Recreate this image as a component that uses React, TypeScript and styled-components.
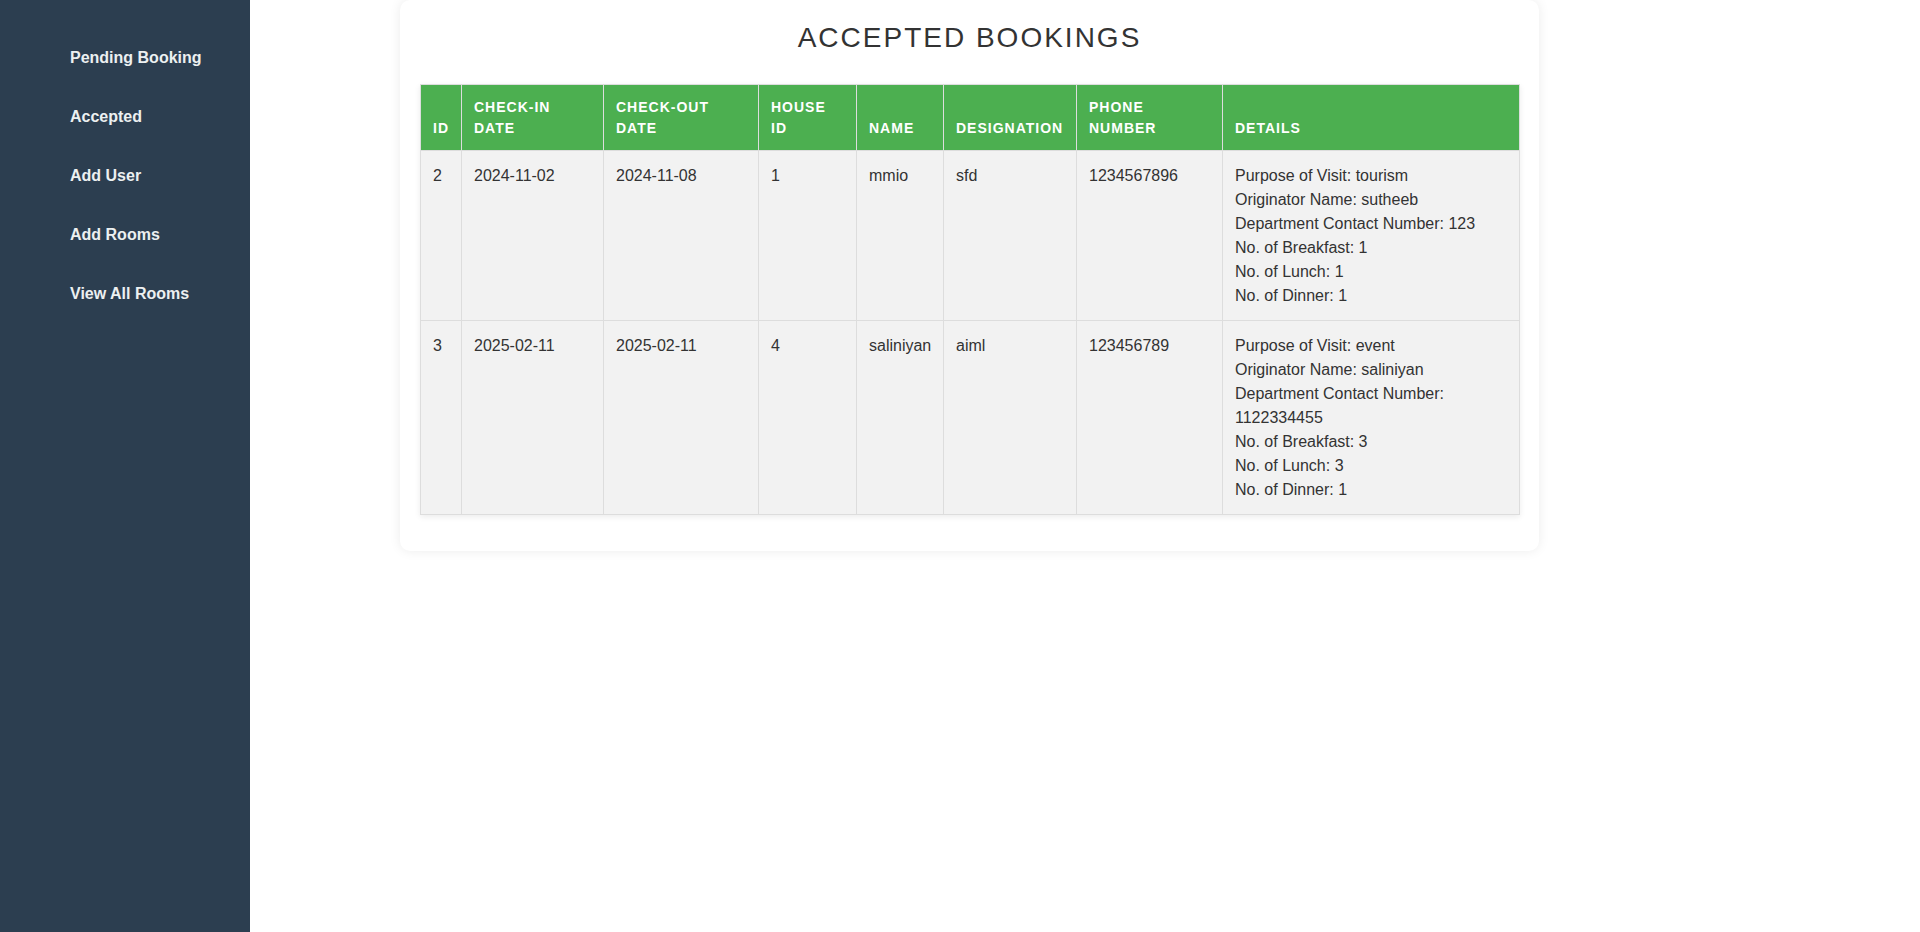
import React from "react";
import styled, { createGlobalStyle } from "styled-components";

const GlobalStyle = createGlobalStyle`
  html, body {
    margin: 0;
    padding: 0;
    background: #ffffff;
    font-family: "Liberation Sans", Arial, sans-serif;
  }
`;

export const Layout = styled.div`
  display: flex;
  min-height: 932px;
`;

export const Sidebar = styled.nav`
  width: 250px;
  flex-shrink: 0;
  background-color: #2c3e50;
  padding: 28px 0 0 70px;
  box-sizing: border-box;
`;

export const NavItem = styled.a`
  display: block;
  padding: 20px 0;
  line-height: 19px;
  font-size: 16px;
  font-weight: bold;
  color: #ecf0f1;
  text-decoration: none;
  cursor: pointer;
`;

export const Main = styled.main`
  flex: 1;
  padding-left: 150px;
`;

export const Card = styled.div`
  width: 1139px;
  box-sizing: border-box;
  padding: 22px 20px 36px 20px;
  background: #ffffff;
  border-radius: 10px;
  box-shadow: 0 0 12px rgba(0, 0, 0, 0.08);
`;

export const Title = styled.h2`
  margin: 0 0 30px;
  text-align: center;
  font-size: 28px;
  font-weight: normal;
  line-height: 32px;
  letter-spacing: 2px;
  color: #333333;
`;

export const Table = styled.table`
  width: 1099px;
  table-layout: fixed;
  border-collapse: collapse;
  box-shadow: 0 2px 6px rgba(0, 0, 0, 0.08);
`;

export const HeadCell = styled.th`
  background-color: #4caf50;
  color: #ffffff;
  font-size: 14px;
  font-weight: bold;
  letter-spacing: 1px;
  line-height: 21px;
  text-transform: uppercase;
  text-align: left;
  vertical-align: bottom;
  padding: 12px 12px 11px;
  border: 1px solid #dddddd;
`;

export const Cell = styled.td`
  background-color: #f2f2f2;
  color: #333333;
  font-size: 16px;
  line-height: 24px;
  text-align: left;
  vertical-align: top;
  padding: 13px 12px 12px;
  border: 1px solid #dddddd;
`;

export const DetailLine = styled.div`
  white-space: normal;
`;

interface IBooking {
  id: number;
  checkIn: string;
  checkOut: string;
  houseId: number;
  name: string;
  designation: string;
  phone: string;
  purpose: string;
  originator: string;
  deptContact: string;
  breakfast: number;
  lunch: number;
  dinner: number;
}

const bookings: IBooking[] = [
  {
    id: 2,
    checkIn: "2024-11-02",
    checkOut: "2024-11-08",
    houseId: 1,
    name: "mmio",
    designation: "sfd",
    phone: "1234567896",
    purpose: "tourism",
    originator: "sutheeb",
    deptContact: "123",
    breakfast: 1,
    lunch: 1,
    dinner: 1,
  },
  {
    id: 3,
    checkIn: "2025-02-11",
    checkOut: "2025-02-11",
    houseId: 4,
    name: "saliniyan",
    designation: "aiml",
    phone: "123456789",
    purpose: "event",
    originator: "saliniyan",
    deptContact: "1122334455",
    breakfast: 3,
    lunch: 3,
    dinner: 1,
  },
];

const columns = [
  { label: ["ID"], width: 41 },
  { label: ["Check-In", "Date"], width: 142 },
  { label: ["Check-Out", "Date"], width: 155 },
  { label: ["House", "ID"], width: 98 },
  { label: ["Name"], width: 87 },
  { label: ["Designation"], width: 133 },
  { label: ["Phone", "Number"], width: 146 },
  { label: ["Details"], width: 297 },
];

const navItems = [
  "Pending Booking",
  "Accepted",
  "Add User",
  "Add Rooms",
  "View All Rooms",
];

export default function App() {
  return (
    <>
      <GlobalStyle />
      <Layout>
        <Sidebar>
          {navItems.map((item) => (
            <NavItem key={item}>{item}</NavItem>
          ))}
        </Sidebar>
        <Main>
          <Card>
            <Title>ACCEPTED BOOKINGS</Title>
            <Table>
              <colgroup>
                {columns.map((c, i) => (
                  <col key={i} style={{ width: c.width }} />
                ))}
              </colgroup>
              <thead>
                <tr>
                  {columns.map((c, i) => (
                    <HeadCell key={i}>
                      {c.label.map((l, j) => (
                        <div key={j}>{l}</div>
                      ))}
                    </HeadCell>
                  ))}
                </tr>
              </thead>
              <tbody>
                {bookings.map((b) => (
                  <tr key={b.id}>
                    <Cell>{b.id}</Cell>
                    <Cell>{b.checkIn}</Cell>
                    <Cell>{b.checkOut}</Cell>
                    <Cell>{b.houseId}</Cell>
                    <Cell>{b.name}</Cell>
                    <Cell>{b.designation}</Cell>
                    <Cell>{b.phone}</Cell>
                    <Cell>
                      <DetailLine>Purpose of Visit: {b.purpose}</DetailLine>
                      <DetailLine>Originator Name: {b.originator}</DetailLine>
                      <DetailLine>
                        Department Contact Number: {b.deptContact}
                      </DetailLine>
                      <DetailLine>No. of Breakfast: {b.breakfast}</DetailLine>
                      <DetailLine>No. of Lunch: {b.lunch}</DetailLine>
                      <DetailLine>No. of Dinner: {b.dinner}</DetailLine>
                    </Cell>
                  </tr>
                ))}
              </tbody>
            </Table>
          </Card>
        </Main>
      </Layout>
    </>
  );
}
